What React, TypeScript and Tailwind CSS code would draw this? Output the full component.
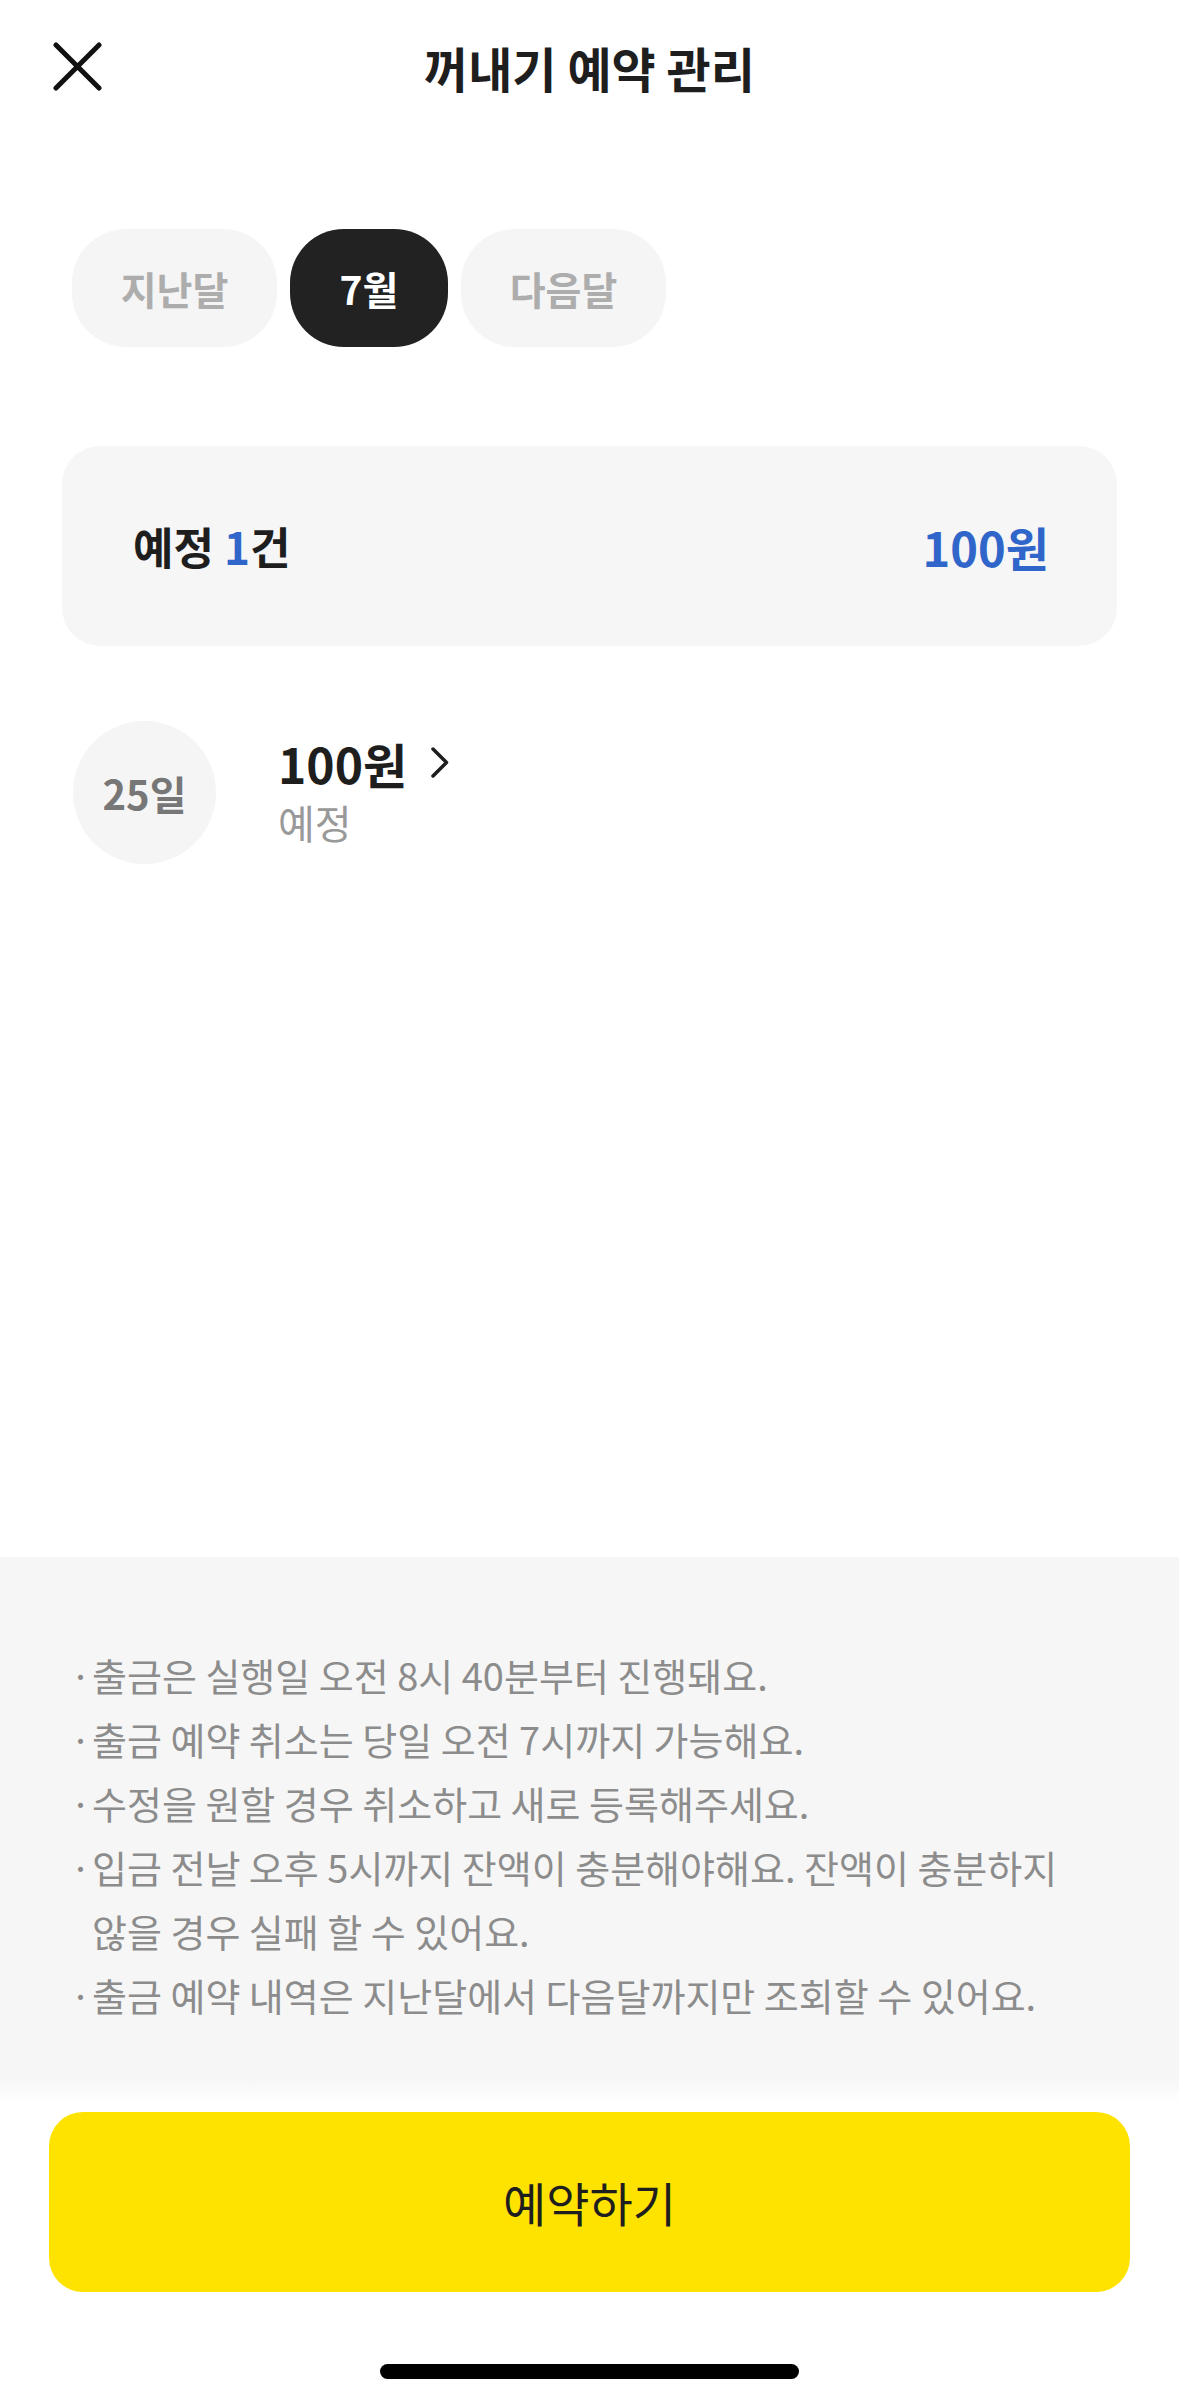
import { useState } from "react";

const notices: string[][] = [
  ["출금은 실행일 오전 8시 40분부터 진행돼요."],
  ["출금 예약 취소는 당일 오전 7시까지 가능해요."],
  ["수정을 원할 경우 취소하고 새로 등록해주세요."],
  ["입금 전날 오후 5시까지 잔액이 충분해야해요. 잔액이 충분하지", "않을 경우 실패 할 수 있어요."],
  ["출금 예약 내역은 지난달에서 다음달까지만 조회할 수 있어요."],
];

function CloseIcon() {
  return (
    <svg width="50" height="50" viewBox="0 0 50 50" fill="none">
      <path d="M3 3L46 46M46 3L3 46" stroke="#111" strokeWidth="5" strokeLinecap="round" />
    </svg>
  );
}

function Chevron() {
  return (
    <svg width="18" height="31" viewBox="0 0 18 31" fill="none">
      <path d="M2 2L15.5 15.5L2 29" stroke="#1e1e1e" strokeWidth="3.5" strokeLinecap="round" strokeLinejoin="round" />
    </svg>
  );
}

export default function App() {
  const [month, setMonth] = useState("current");

  const tabs = [
    { key: "prev", label: "지난달", width: "w-[205px]" },
    { key: "current", label: "7월", width: "w-[158px]" },
    { key: "next", label: "다음달", width: "w-[205px]" },
  ];

  return (
    <div
      className="h-[2396px] w-full bg-white flex flex-col"
      style={{ fontFamily: '"Noto Sans CJK KR", "Noto Sans", sans-serif' }}
    >
      {/* Header */}
      <header className="grid grid-cols-[1fr_auto_1fr] items-center h-[134px] px-[53px]">
        <button className="justify-self-start w-[50px] h-[50px] flex items-center justify-center">
          <CloseIcon />
        </button>
        <h1 className="text-[48px] font-bold text-[#1e1e1e] leading-none">꺼내기 예약 관리</h1>
        <div />
      </header>

      {/* Month tabs */}
      <div className="flex gap-[13px] pl-[72px] mt-[95px]">
        {tabs.map((t) => (
          <button
            key={t.key}
            onClick={() => setMonth(t.key)}
            className={
              month === t.key
                ? `${t.width} h-[118px] rounded-[54px] bg-[#222222] text-white text-[39px] font-bold flex items-center justify-center`
                : `${t.width} h-[118px] rounded-[54px] bg-[#f5f5f5] text-[#adadad] text-[39px] font-bold flex items-center justify-center`
            }
          >
            {t.label}
          </button>
        ))}
      </div>

      {/* Summary */}
      <div className="mx-[62px] mt-[99px] h-[200px] rounded-[38px] bg-[#f6f6f7] flex items-center justify-between pl-[71px] pr-[68px]">
        <p className="text-[44px] font-bold text-[#1e1e1e] leading-none">
          예정 <span className="text-[#3065c9]">1</span>건
        </p>
        <p className="text-[47px] font-bold text-[#3065c9] leading-none">100원</p>
      </div>

      {/* Item */}
      <div className="flex items-center mt-[75px] pl-[73px]">
        <div className="w-[143px] h-[143px] rounded-full bg-[#f5f5f5] flex items-center justify-center">
          <span className="text-[40px] font-bold text-[#777777] leading-none">25일</span>
        </div>
        <div className="ml-[62px] flex flex-col">
          <div className="flex items-center gap-[24px] h-[58px]">
            <span className="text-[48px] font-bold text-[#1e1e1e] leading-none">100원</span>
            <Chevron />
          </div>
          <span className="text-[40px] text-[#999999] leading-[60px]">예정</span>
        </div>
      </div>

      {/* Notices */}
      <div className="mt-auto bg-[#f6f6f6] pt-[86px] pb-[50px] pl-[70px] pr-[30px]">
        <ul className="flex flex-col">
          {notices.map((lines, i) => (
            <li key={i} className="flex text-[38px] text-[#8c8c8c] leading-[64px]">
              <span className="w-[22px] shrink-0">·</span>
              <span>
                {lines.map((l, j) => (
                  <span key={j} className="block whitespace-nowrap">
                    {l}
                  </span>
                ))}
              </span>
            </li>
          ))}
        </ul>
      </div>
      <div className="h-[25px] bg-gradient-to-b from-[#f6f6f6] to-white" />

      {/* Bottom button */}
      <div className="px-[49px] pt-[10px]">
        <button className="w-full h-[180px] rounded-[34px] bg-[#ffe300] text-[47px] text-[#1e1e1e] flex items-center justify-center">
          예약하기
        </button>
      </div>
      <div className="flex justify-center pt-[72px] pb-[17px]">
        <div className="w-[419px] h-[15px] rounded-full bg-black" />
      </div>
    </div>
  );
}
